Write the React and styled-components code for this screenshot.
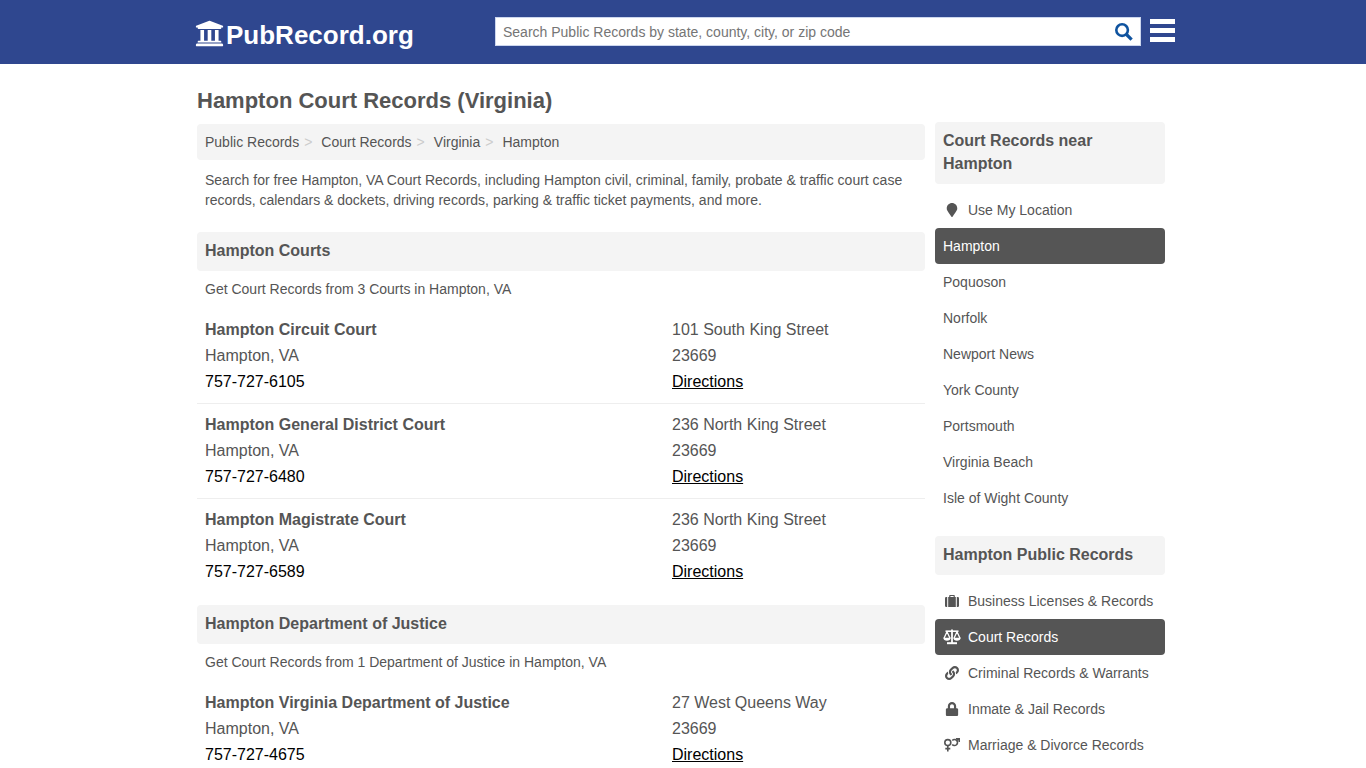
import React, { useState } from "react";
import styled, { createGlobalStyle } from "styled-components";
import { FaUniversity, FaMapMarker, FaLink, FaLock } from "react-icons/fa";

const SuitcaseIcon = () => (
  <svg viewBox="0 0 14 14" fill="currentColor" aria-hidden="true">
    <path d="M1.2 3h1v10h-1A1.2 1.2 0 0 1 0 11.8V4.2A1.2 1.2 0 0 1 1.2 3z" />
    <path d="M12.8 3h-1v10h1a1.2 1.2 0 0 0 1.2-1.2V4.2A1.2 1.2 0 0 0 12.8 3z" />
    <path d="M5 1h4a.8.8 0 0 1 .8.8V3h1v10H3.2V3h1V1.8A.8.8 0 0 1 5 1zM5.4 2.1V3h3.2v-.9z" />
  </svg>
);

const ScaleIcon = () => (
  <svg
    viewBox="0 1 18 14"
    fill="none"
    stroke="currentColor"
    aria-hidden="true"
  >
    <path d="M2.5 2.2h13" strokeWidth="1.6" />
    <path d="M9 .6v13.4" strokeWidth="1.8" />
    <path d="M4 14.2h10" strokeWidth="2" />
    <path
      d="M1 9.2l3-6.4 3 6.4M11 9.2l3-6.4 3 6.4"
      strokeWidth="1.3"
      strokeLinejoin="round"
    />
    <path
      d="M.3 8.8h7.4c0 2-1.7 3-3.7 3s-3.700-1-3.700-3zM10.300 8.800h7.400c0 2-1.700 3-3.700 3s-3.700-1-3.700-3z"
      fill="currentColor"
      stroke="none"
    />
  </svg>
);

const VenusMarsIcon = () => (
  <svg
    viewBox="0 0 16 14"
    fill="none"
    stroke="currentColor"
    strokeWidth="1.6"
    aria-hidden="true"
  >
    <circle cx="3.8" cy="4.6" r="3" />
    <path d="M3.800 7.600v6M1.300 10.600h5" />
    <path d="M8.300 2.500a3 3 0 1 1-.1 4" />
    <path d="M12.400 2.900l2.500-2.200M11.900.8h3.300v3.200" />
  </svg>
);

const SearchIcon = () => (
  <svg
    viewBox="0 0 18 18"
    width="18"
    height="18"
    fill="none"
    stroke="currentColor"
    aria-hidden="true"
  >
    <circle cx="7.1" cy="7.1" r="5.8" strokeWidth="2.6" />
    <path d="M11 11l5.6 5.6" strokeWidth="3.2" />
  </svg>
);

const crumbs = ["Public Records", "Court Records", "Virginia", "Hampton"];

const sections = [
  {
    title: "Hampton Courts",
    intro: "Get Court Records from 3 Courts in Hampton, VA",
    offices: [
      {
        name: "Hampton Circuit Court",
        phone: "757-727-6105",
        street: "101 South King Street",
      },
      {
        name: "Hampton General District Court",
        phone: "757-727-6480",
        street: "236 North King Street",
      },
      {
        name: "Hampton Magistrate Court",
        phone: "757-727-6589",
        street: "236 North King Street",
      },
    ],
  },
  {
    title: "Hampton Department of Justice",
    intro: "Get Court Records from 1 Department of Justice in Hampton, VA",
    offices: [
      {
        name: "Hampton Virginia Department of Justice",
        phone: "757-727-4675",
        street: "27 West Queens Way",
      },
    ],
  },
];

const nearby = [
  { text: "Use My Location", Icon: FaMapMarker },
  { text: "Hampton", active: true },
  { text: "Poquoson" },
  { text: "Norfolk" },
  { text: "Newport News" },
  { text: "York County" },
  { text: "Portsmouth" },
  { text: "Virginia Beach" },
  { text: "Isle of Wight County" },
];

const publicRecords = [
  { text: "Business Licenses & Records", Icon: SuitcaseIcon },
  { text: "Court Records", Icon: ScaleIcon, active: true },
  { text: "Criminal Records & Warrants", Icon: FaLink },
  { text: "Inmate & Jail Records", Icon: FaLock },
  { text: "Marriage & Divorce Records", Icon: VenusMarsIcon },
];

const Header = () => {
  const [query, setQuery] = useState("");

  return (
    <HeaderBar>
      <HeaderInner>
        <Logo href="#">
          <FaUniversity />
          <span>PubRecord.org</span>
        </Logo>
        <SearchForm onSubmit={(e) => e.preventDefault()}>
          <SearchInput
            type="text"
            aria-label="Search Public Records"
            placeholder="Search Public Records by state, county, city, or zip code"
            value={query}
            onChange={(e) => setQuery(e.target.value)}
          />
          <SearchButton type="submit" aria-label="Search">
            <SearchIcon />
          </SearchButton>
        </SearchForm>
        <MenuButton type="button" aria-label="Menu">
          <MenuBar />
          <MenuBar />
          <MenuBar />
        </MenuButton>
      </HeaderInner>
    </HeaderBar>
  );
};

const Office = ({ name, phone, street }) => (
  <OfficeRow>
    <div>
      <OfficeName href="#">{name}</OfficeName>
      <div>Hampton, VA</div>
      <Phone href={`tel:${phone}`}>{phone}</Phone>
    </div>
    <div>
      <div>{street}</div>
      <div>23669</div>
      <Directions href="#">Directions</Directions>
    </div>
  </OfficeRow>
);

const SideNav = ({ title, items }) => (
  <nav aria-label={title}>
    <Heading>{title}</Heading>
    <SideList>
      {items.map(({ text, Icon, active }) => (
        <li key={text}>
          <SideLink href="#" $active={active}>
            {Icon && (
              <IconWrap>
                <Icon />
              </IconWrap>
            )}
            {text}
          </SideLink>
        </li>
      ))}
    </SideList>
  </nav>
);

const App = () => (
  <>
    <GlobalStyle />
    <Header />
    <Page>
      <Title>Hampton Court Records (Virginia)</Title>
      <Columns>
        <Main>
          <Breadcrumb>
            {crumbs.map((crumb) => (
              <li key={crumb}>
                <a href="#">{crumb}</a>
              </li>
            ))}
          </Breadcrumb>
          <Summary>
            Search for free Hampton, VA Court Records, including Hampton civil,
            criminal, family, probate & traffic court case records, calendars &
            dockets, driving records, parking & traffic ticket payments, and
            more.
          </Summary>
          {sections.map(({ title, intro, offices }) => (
            <Section key={title}>
              <Heading>{title}</Heading>
              <Intro>{intro}</Intro>
              {offices.map((office) => (
                <Office key={office.name} {...office} />
              ))}
            </Section>
          ))}
        </Main>
        <Sidebar>
          <SideNav title="Court Records near Hampton" items={nearby} />
          <SideNav title="Hampton Public Records" items={publicRecords} />
        </Sidebar>
      </Columns>
    </Page>
  </>
);

export default App;

const GlobalStyle = createGlobalStyle`
  * {
    box-sizing: border-box;
  }
  body {
    margin: 0;
    background-color: #fff;
    color: #555;
    font-family: "Liberation Sans", Arial, sans-serif;
    font-size: 14px;
    line-height: 20px;
  }
  a {
    color: inherit;
    text-decoration: none;
  }
  ul, ol {
    margin: 0;
    padding: 0;
    list-style: none;
  }
`;

const HeaderBar = styled.header`
  background-color: #2f478f;
`;

const HeaderInner = styled.div`
  display: flex;
  align-items: flex-start;
  max-width: 984px;
  height: 64px;
  margin: 0 auto;
  padding: 17px 0 0 4px;
`;

const Logo = styled.a`
  display: flex;
  gap: 2px;
  margin-right: auto;
  color: #fff;
  font-size: 26px;
  font-weight: bold;
  line-height: 36px;
  svg {
    margin-top: 2px;
    font-size: 29px;
  }
`;

const SearchForm = styled.form`
  display: flex;
  flex: 0 1 646px;
  height: 29px;
  margin-left: 24px;
  border: 1px solid #ccd6ee;
  background-color: #fff;
`;

const SearchInput = styled.input`
  flex: 1;
  min-width: 0;
  padding: 0 7px;
  border: none;
  outline: none;
  background-color: transparent;
  color: #555;
  font-family: inherit;
  font-size: 14px;
  &::placeholder {
    color: #757575;
  }
`;

const SearchButton = styled.button`
  display: flex;
  align-items: center;
  padding: 0 7px;
  border: none;
  background-color: transparent;
  color: #0f539f;
  cursor: pointer;
`;

const MenuButton = styled.button`
  display: flex;
  flex-direction: column;
  gap: 4px;
  margin-left: 9px;
  padding: 2px 0;
  border: none;
  background-color: transparent;
  cursor: pointer;
`;

const MenuBar = styled.span`
  width: 25px;
  height: 5px;
  background-color: #fff;
`;

const Page = styled.div`
  max-width: 972px;
  margin: 0 auto;
  padding-right: 4px;
`;

const Title = styled.h1`
  margin: 0;
  padding: 22px 0 6px;
  font-size: 22px;
  line-height: 30px;
`;

const Columns = styled.div`
  display: flex;
  align-items: flex-start;
  gap: 10px;
`;

const Main = styled.main`
  flex: 1;
  min-width: 0;
  padding-top: 2px;
`;

const Sidebar = styled.aside`
  display: flex;
  flex-direction: column;
  flex: 0 0 230px;
  gap: 20px;
`;

const Breadcrumb = styled.ol`
  display: flex;
  padding: 8px;
  border-radius: 4px;
  background-color: #f4f4f4;
  li + li::before {
    content: ">";
    padding: 0 9px 0 5px;
    color: #ccc;
  }
`;

const Summary = styled.p`
  margin: 0;
  padding: 10px 8px 11px;
`;

const Intro = styled.p`
  margin: 0;
  padding: 8px 8px 10px;
`;

const Section = styled.section`
  margin-top: 11px;
`;

const Heading = styled.h2`
  margin: 0;
  padding: 7px 8px 9px;
  border-radius: 4px;
  background-color: #f4f4f4;
  font-size: 16px;
  line-height: 23px;
`;

const OfficeRow = styled.div`
  display: grid;
  grid-template-columns: 1fr 245px;
  padding: 8px;
  border-bottom: 1px solid #eee;
  font-size: 16px;
  line-height: 26px;
  &:last-child {
    border-bottom-color: transparent;
  }
`;

const OfficeName = styled.a`
  display: block;
  font-weight: bold;
`;

const Phone = styled.a`
  color: #000;
`;

const Directions = styled.a`
  color: #000;
  text-decoration: underline;
`;

const SideList = styled.ul`
  padding-top: 8px;
`;

const SideLink = styled.a`
  display: flex;
  align-items: center;
  padding: 8px;
  border-radius: 4px;
  background-color: ${({ $active }) => ($active ? "#555" : "transparent")};
  color: ${({ $active }) => ($active ? "#fff" : "inherit")};
`;

const IconWrap = styled.span`
  display: flex;
  margin-right: 7px;
  svg {
    width: 18px;
    height: 14px;
    overflow: visible;
  }
`;
